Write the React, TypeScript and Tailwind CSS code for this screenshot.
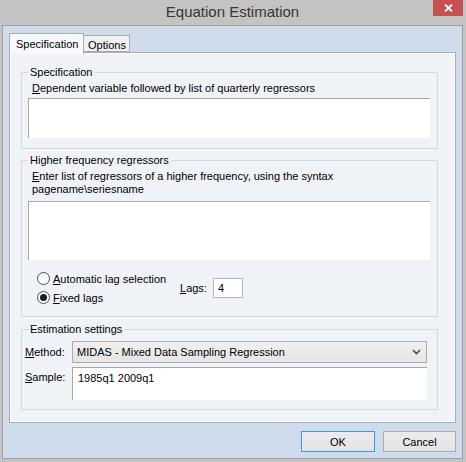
import React from 'react';

function Radio({ checked, children }: { checked?: boolean; children: React.ReactNode }) {
  return (
    <label className="flex h-[19px] items-center">
      <span className="flex h-[13px] w-[13px] items-center justify-center rounded-full border border-[#4f4f4f] bg-gradient-to-b from-[#f4f4f4] to-[#ffffff]">
        {checked && <span className="h-[7px] w-[7px] rounded-full bg-[#1e1e1e]" />}
      </span>
      <span className="ml-[3px]">{children}</span>
    </label>
  );
}

export default function App() {
  return (
    <div
      className="flex h-[462px] w-[466px] flex-col bg-[#c3c3c3] pb-[3px] pl-[2px] pr-[3px] text-[11px] leading-[14px] text-black"
      style={{ fontFamily: '"Liberation Sans", Arial, sans-serif' }}
    >
      {/* title bar */}
      <div className="relative flex h-[25px] shrink-0 items-center justify-center pb-[2px]">
        <span className="text-[15px] text-[#363636]">Equation Estimation</span>
        <div className="absolute right-0 top-0 flex h-[16px] w-[30px] items-center justify-center bg-[#c75050]">
          <svg width="9" height="8" viewBox="0 0 9 8">
            <path d="M1 0.5 L8 7.5 M8 0.5 L1 7.5" stroke="#fff" strokeWidth="1.8" />
          </svg>
        </div>
      </div>

      {/* client area */}
      <div className="flex flex-1 flex-col border border-[#a0a0a0] bg-[#cfdcec] pl-[6px] pt-[7px]">
        {/* tabs */}
        <div className="relative z-10 flex h-[19px] items-start">
          <div className="h-[21px] w-[75px] border border-b-0 border-[#a8abb0] bg-[#f7f9fc] pl-[6px] pt-[3px]">
            Specification
          </div>
          <div className="mt-[2px] h-[17px] w-[46px] border border-l-0 border-[#a8abb0] bg-[#f0f0f0] pl-[4px] pt-[2px]">
            Options
          </div>
        </div>

        {/* panel */}
        <div className="flex h-[371px] w-[447px] flex-col border border-[#a8abb0] bg-[#eff3f8] pl-[11px] pt-[12px] shadow-[inset_0_0_0_1px_#ffffff]">
          {/* Specification group */}
          <fieldset className="w-[417px] border border-[#d5d9df] pb-[10px]">
            <legend className="ml-[6px] px-[2px]">Specification</legend>
            <div className="ml-[10px] mt-[2px]">
              <u>D</u>ependent variable followed by list of quarterly regressors
            </div>
            <textarea className="ml-[6px] mt-[3px] block h-[40px] w-[402px] resize-none border-l border-t border-[#a5a7ab] border-b-[#f4f4f4] border-r-[#f4f4f4] bg-white outline-none" />
          </fieldset>

          {/* Higher frequency group */}
          <fieldset className="mt-[4px] w-[417px] border border-[#d5d9df] pb-[9px]">
            <legend className="ml-[6px] px-[2px]">Higher frequency regressors</legend>
            <div className="ml-[10px] mt-[3px] leading-[13px]">
              <div>
                <u>E</u>nter list of regressors of a higher frequency, using the syntax
              </div>
              <div>pagename\seriesname</div>
            </div>
            <textarea className="ml-[6px] mt-[5px] block h-[59px] w-[402px] resize-none border-l border-t border-[#a5a7ab] border-b-[#f4f4f4] border-r-[#f4f4f4] bg-white outline-none" />
            <div className="ml-[15px] mt-[9px] flex items-center">
              <div className="flex w-[143px] flex-col">
                <Radio>
                  <u>A</u>utomatic lag selection
                </Radio>
                <Radio checked>
                  <u>F</u>ixed lags
                </Radio>
              </div>
              <span className="w-[33px]">
                <u>L</u>ags:
              </span>
              <div className="flex h-[20px] w-[30px] items-center border border-[#b4b7bc] bg-white pl-[4px]">
                4
              </div>
            </div>
          </fieldset>

          {/* Estimation settings group */}
          <fieldset className="mt-[5px] w-[417px] border border-[#d5d9df] pb-[9px]">
            <legend className="ml-[6px] px-[2px]">Estimation settings</legend>
            <div className="ml-[3px] mt-[5px] flex items-center">
              <span className="w-[47px]">
                <u>M</u>ethod:
              </span>
              <div className="flex h-[22px] w-[355px] items-center justify-between border border-[#acacac] bg-gradient-to-b from-[#f0f0f0] to-[#e5e5e5] pl-[4px] pr-[5px]">
                <span>MIDAS - Mixed Data Sampling Regression</span>
                <svg width="9" height="6" viewBox="0 0 9 6">
                  <path d="M1 1 L4.5 4.5 L8 1" stroke="#4a4a4a" strokeWidth="1.6" fill="none" />
                </svg>
              </div>
            </div>
            <div className="ml-[3px] mt-[4px] flex items-start">
              <span className="mt-[3px] w-[47px]">
                <u>S</u>ample:
              </span>
              <textarea
                defaultValue="1985q1 2009q1"
                className="block h-[33px] w-[355px] resize-none border-l border-t border-[#a5a7ab] border-b-[#f4f4f4] border-r-[#f4f4f4] bg-white pl-[5px] pt-[3px] leading-[14px] outline-none"
              />
            </div>
          </fieldset>
        </div>

        {/* buttons */}
        <div className="mt-[8px] flex w-[447px] justify-end gap-[8px]">
          <button className="h-[21px] w-[74px] border border-[#3399ff] bg-gradient-to-b from-[#ececec] to-[#e3e3e3]">
            OK
          </button>
          <button className="h-[21px] w-[73px] border border-[#acacac] bg-gradient-to-b from-[#ececec] to-[#e3e3e3]">
            Cancel
          </button>
        </div>
      </div>
    </div>
  );
}
